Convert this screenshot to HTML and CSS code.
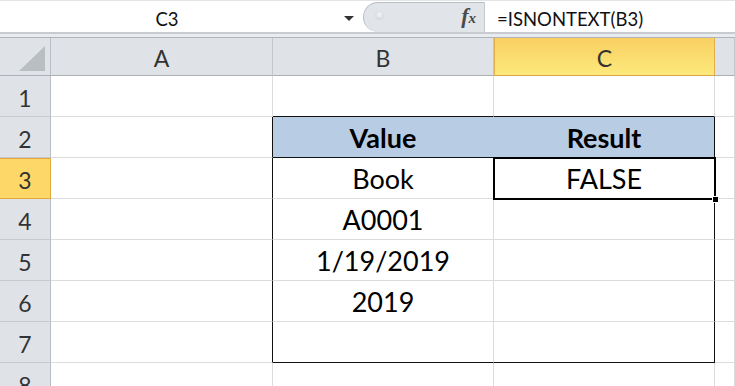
FILE: index.html
```html
<!DOCTYPE html>
<html lang="en">
<head>
    <meta charset="UTF-8">
    <title>ISNONTEXT</title>
    <link rel="stylesheet" href="styles.css">
</head>
<body>
    <div class="formula-bar">
        <div class="name-box">
            <span class="name">C3</span>
            <span class="arrow"></span>
        </div>
        <div class="fx-panel">
            <span class="knob"></span>
            <span class="fx">f<span class="fx-x">x</span></span>
        </div>
        <div class="formula">=ISNONTEXT(B3)</div>
    </div>
    <div class="bar-gap"></div>

    <div class="sheet">
        <div class="corner"><span class="tri"></span></div>
        <div class="col-head">A</div>
        <div class="col-head">B</div>
        <div class="col-head active">C</div>
        <div class="col-head"></div>

        <div class="row-head">1</div>
        <div class="cell"></div>
        <div class="cell tb-top"></div>
        <div class="cell tb-top"></div>
        <div class="cell"></div>

        <div class="row-head">2</div>
        <div class="cell tb-left"></div>
        <div class="cell th th-first">Value</div>
        <div class="cell th tb-right">Result</div>
        <div class="cell"></div>

        <div class="row-head active">3</div>
        <div class="cell tb-left"></div>
        <div class="cell">Book</div>
        <div class="cell tb-right selected">FALSE<span class="handle"></span></div>
        <div class="cell"></div>

        <div class="row-head">4</div>
        <div class="cell tb-left"></div>
        <div class="cell">A0001</div>
        <div class="cell tb-right"></div>
        <div class="cell"></div>

        <div class="row-head">5</div>
        <div class="cell tb-left"></div>
        <div class="cell">1/19/2019</div>
        <div class="cell tb-right"></div>
        <div class="cell"></div>

        <div class="row-head">6</div>
        <div class="cell tb-left"></div>
        <div class="cell">2019</div>
        <div class="cell tb-right"></div>
        <div class="cell"></div>

        <div class="row-head">7</div>
        <div class="cell tb-left"></div>
        <div class="cell tb-bottom"></div>
        <div class="cell tb-right tb-bottom"></div>
        <div class="cell"></div>

        <div class="row-head">8</div>
        <div class="cell"></div>
        <div class="cell"></div>
        <div class="cell"></div>
        <div class="cell"></div>
    </div>
</body>
</html>
```

FILE: styles.css
```css
html, body {
    margin: 0;
    padding: 0;
    height: 386px;
    overflow: hidden;
    background-color: white;
    font-family: Lato, "Open Sans", Arial, sans-serif;
    color: #000;
}

/* formula bar */
.formula-bar {
    display: flex;
    height: 31px;
    border-top: 1px solid #e2e4e7;
    border-bottom: 2px solid #c8cbcf;
    background-color: white;
}
.name-box {
    width: 363px;
    display: flex;
    align-items: flex-start;
    box-sizing: border-box;
}
.name {
    width: 334px;
    text-align: center;
    font-size: 18.5px;
    line-height: 22px;
    padding-top: 7px;
    color: #111;
}
.arrow {
    margin-top: 15px;
    margin-left: 10px;
    width: 0;
    height: 0;
    border-left: 5px solid transparent;
    border-right: 5px solid transparent;
    border-top: 5px solid #333;
}
.fx-panel {
    width: 122px;
    margin-top: 1px;
    box-sizing: border-box;
    background-color: #e1e4e8;
    border: 1px solid #b9bec4;
    border-right-color: #c5c9ce;
    border-bottom: none;
    border-radius: 15px 0 0 15px;
    display: flex;
    align-items: center;
    justify-content: space-between;
    padding: 0 8px 0 11px;
}
.knob {
    width: 9px;
    height: 9px;
    border-radius: 50%;
    background: radial-gradient(circle at 50% 40%, #f4f5f6, #c9cdd2);
    margin-top: -4px;
}
.fx {
    font-family: "Liberation Serif", "DejaVu Serif", serif;
    font-style: italic;
    font-weight: bold;
    font-size: 22px;
    color: #4a4a4a;
    margin-top: -3px;
}
.fx-x {
    font-size: 15px;
    margin-left: 0;
}
.formula {
    flex: 1;
    font-size: 18.5px;
    line-height: 22px;
    padding: 7px 0 0 12px;
    color: #111;
}
.bar-gap {
    height: 3px;
    background-color: #e9ecef;
    border-bottom: 1px solid #aeb4ba;
}

/* grid */
.sheet {
    display: grid;
    grid-template-columns: 51px 222px 221px 221px 1fr;
    grid-template-rows: 38px repeat(8, 41px);
}
.sheet > div {
    box-sizing: border-box;
    border-right: 1px solid #dadcdd;
    border-bottom: 1px solid #dadcdd;
}
.corner {
    background-color: #dfe3e8;
    position: relative;
    border-right-color: #b9bec4 !important;
    border-bottom-color: #aab0b6 !important;
}
.tri {
    position: absolute;
    right: 5px;
    bottom: 4px;
    width: 0;
    height: 0;
    border-left: 26px solid transparent;
    border-bottom: 25px solid #b9bec3;
}
.col-head {
    background-color: #dfe3e8;
    border-right-color: #c3c8cd !important;
    border-bottom-color: #aab0b6 !important;
    text-align: center;
    font-size: 23px;
    line-height: 40px;
    color: #333;
}
.col-head.active {
    background: linear-gradient(#f9cf61, #fde97c);
    border-right-color: #e2b04b !important;
    border-bottom-color: #d9a441 !important;
    border-left: 1px solid #e2b04b;
}
.row-head {
    background-color: #dfe3e8;
    border-right-color: #b9bec4 !important;
    border-bottom-color: #c6cace !important;
    text-align: center;
    font-size: 23px;
    line-height: 44px;
    color: #333;
}
.row-head.active {
    background-color: #fdd868;
    border-right-color: #e2a83c !important;
    border-bottom-color: #e2a83c !important;
    box-shadow: inset 0 1px 0 #e2a83c;
}
.cell {
    text-align: center;
    font-size: 27px;
    line-height: 42px;
    white-space: nowrap;
}

/* table B2:C7 */
.tb-left {
    border-right-color: #111 !important;
}
.tb-right {
    border-right-color: #111 !important;
}
.tb-top {
    border-bottom-color: #111 !important;
}
.tb-bottom {
    border-bottom-color: #111 !important;
}
.th {
    background-color: #b8cce4;
    font-weight: bold;
    border-bottom-color: #111 !important;
}
.th-first {
    border-right-color: #b8cce4 !important;
}

/* active cell */
.selected {
    position: relative;
}
.selected::after {
    content: "";
    position: absolute;
    top: -1px;
    left: -1px;
    right: -2px;
    bottom: -2px;
    border: 2px solid #000;
    box-shadow: inset 0 0 0 1px #fff;
}
.handle {
    position: absolute;
    right: -5px;
    bottom: -5px;
    width: 5px;
    height: 5px;
    background-color: #000;
    border: 1px solid #fff;
    z-index: 1;
}
```
